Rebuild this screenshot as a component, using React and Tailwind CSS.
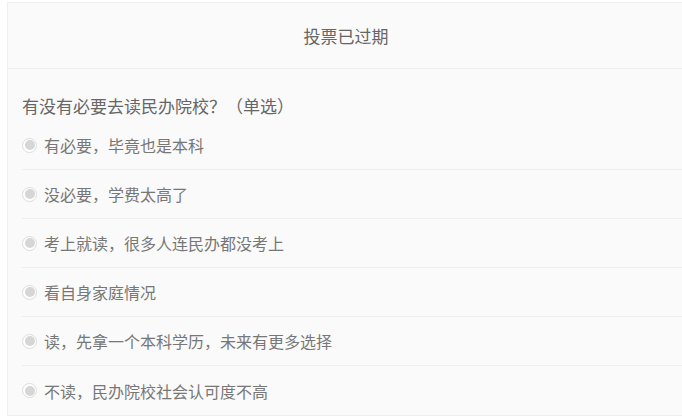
import React from "react";

const options = [
  "有必要，毕竟也是本科",
  "没必要，学费太高了",
  "考上就读，很多人连民办都没考上",
  "看自身家庭情况",
  "读，先拿一个本科学历，未来有更多选择",
  "不读，民办院校社会认可度不高",
];

export default function App() {
  return (
    <div
      className="w-[682px] h-[418px] overflow-hidden bg-white"
      style={{ fontFamily: '"Noto Sans CJK SC", "Noto Sans", sans-serif' }}
    >
      <div className="ml-[7px] mt-[2px] w-[678px] border border-[#eeeeee] bg-[#fafafa]">
        <div className="h-[66px] flex items-center justify-center border-b border-[#eeeeee] text-[17px] text-[#666666]">
          投票已过期
        </div>
        <div className="pl-[14px]">
          <div className="pt-[25px] pb-[3px] leading-[24px] text-[17px] text-[#666666]">
            有没有必要去读民办院校？（单选）
          </div>
          {options.map((o, i) => (
            <div
              key={o}
              className={
                i < options.length - 1
                  ? "h-[49px] flex items-center gap-[7px] border-b border-[#eeeeee] text-[16px] text-[#777777]"
                  : "h-[49px] flex items-center gap-[7px] text-[16px] text-[#777777]"
              }
            >
              <span className="w-[15px] h-[15px] rounded-full border border-[#dcdcdc] bg-white flex items-center justify-center shrink-0">
                <span className="w-[10px] h-[10px] rounded-full bg-[#d6d6d6]" />
              </span>
              <span>{o}</span>
            </div>
          ))}
        </div>
      </div>
    </div>
  );
}
